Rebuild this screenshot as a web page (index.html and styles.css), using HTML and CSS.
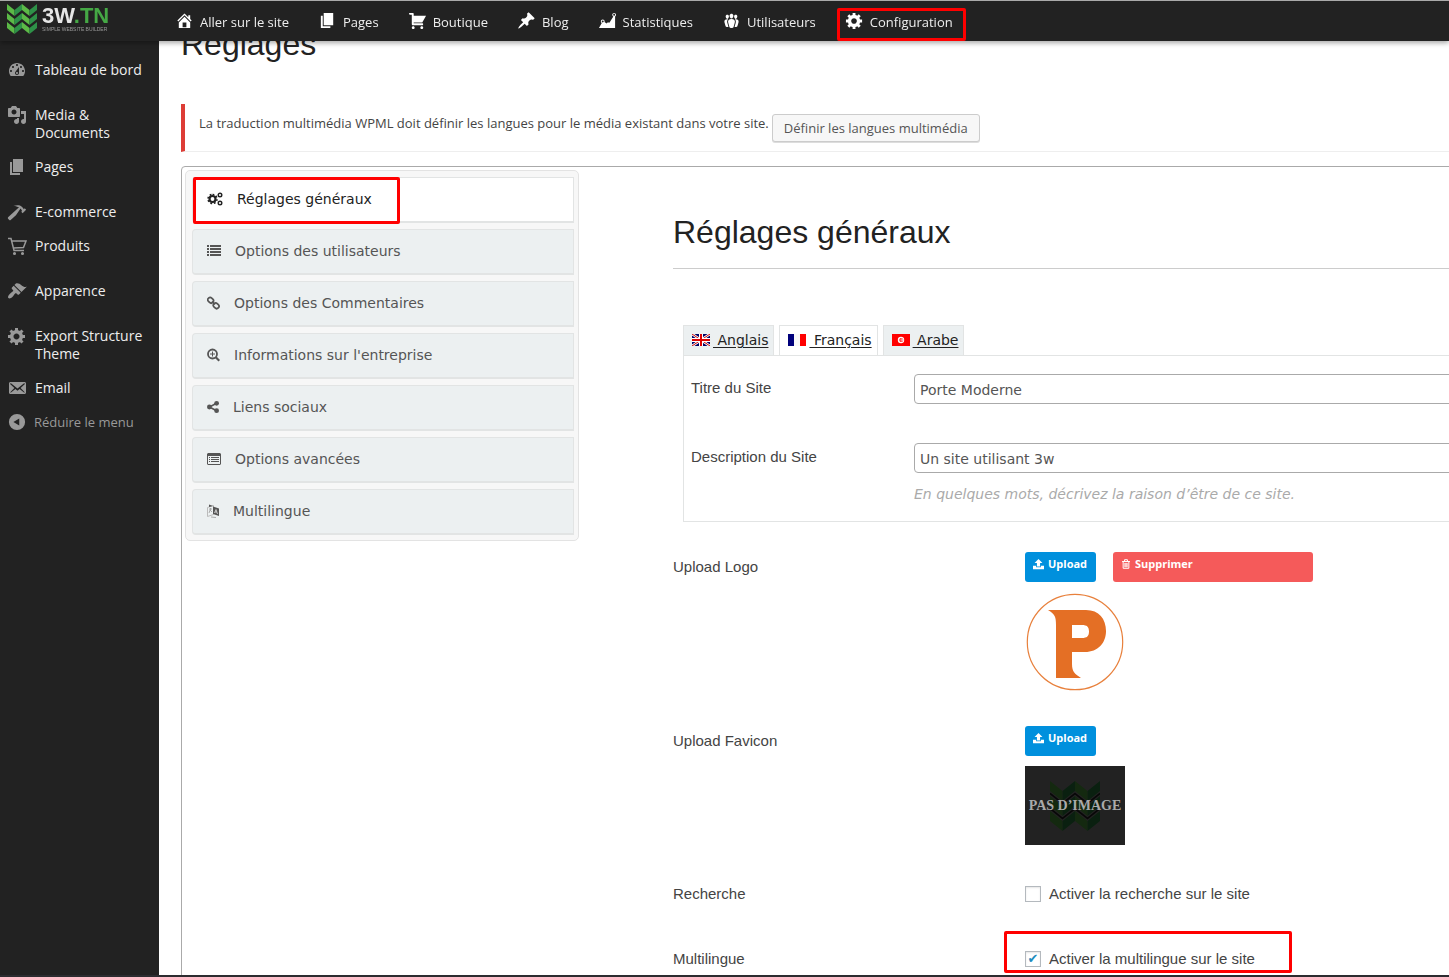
FILE: index.html
```html
<!DOCTYPE html>
<html lang="fr">
<head>
<meta charset="utf-8">
<title>Réglages</title>
<link rel="stylesheet" href="styles.css">
</head>
<body>
<svg class="sprite" aria-hidden="true">
  <symbol id="page" viewBox="0 0 20 20"><path d="M6 15V2h10v13H6zm-1 1h8v2H3V5h2v11z"/></symbol>
  <symbol id="gear" viewBox="0 0 20 20"><path d="M18 12h-2.180c-.17.7-.44 1.350-.81 1.930l1.540 1.540-2.100 2.100-1.540-1.540c-.58.36-1.230.63-1.910.79V19H8v-2.180c-.68-.16-1.330-.43-1.910-.79l-1.540 1.540-2.120-2.120 1.540-1.540c-.36-.58-.63-1.230-.79-1.910H1V9.030h2.170c.16-.7.44-1.350.8-1.940L2.430 5.550l2.100-2.100 1.540 1.540c.58-.37 1.240-.64 1.930-.81V2h3v2.180c.68.16 1.330.43 1.910.79l1.540-1.540 2.120 2.120-1.540 1.540c.36.59.64 1.240.8 1.940H18V12zm-8.500 1.500c1.660 0 3-1.340 3-3s-1.340-3-3-3-3 1.340-3 3 1.340 3 3 3z"/></symbol>
  <symbol id="upload" viewBox="0 0 14 14"><path d="M7 0L2 5.200h3v4.300h4V5.200h3zM0 8.500h4v2h6v-2h4V13H0z"/></symbol>
  <symbol id="chevrons" viewBox="0 0 30 30">
    <g class="leaf-a"><path d="M0 0l7.500 6v6L0 6zM15 0l7.500 6v6L15 6zM0 9l7.500 6v6L0 15zM15 9l7.500 6v6L15 15zM0 18l7.500 6v6L0 24zM15 18l7.500 6v6L15 24z"/></g>
    <g class="leaf-b"><path d="M15 0L7.500 6v6L15 6zM30 0l-7.500 6v6L30 6zM15 9l-7.500 6v6l7.500-6zM30 9l-7.500 6v6l7.500-6zM15 18l-7.500 6v6l7.500-6zM30 18l-7.500 6v6l7.500-6z"/></g>
    <path class="leaf-gap" d="M0 7.500l7.500 6L15 7.500l7.500 6 7.500-6M0 16.500l7.500 6 7.500-6 7.500 6 7.500-6"/>
  </symbol>
</svg>

<header class="topbar">
  <a class="brand" href="#" aria-label="3W.TN">
    <svg class="brand-mark"><use href="#chevrons"/></svg>
    <span class="brand-words">
      <span class="brand-name">3W<span class="brand-tn">.TN</span></span>
      <span class="brand-tag">SIMPLE WEBSITE BUILDER</span>
    </span>
  </a>
  <nav class="topnav">
    <a href="#"><svg viewBox="0 0 20 20"><path d="M16 8.500l1.530 1.530-1.060 1.060L10 4.600l-6.470 6.490-1.060-1.060L10 2.500l4 4v-2h2v4zm-6-2.460l6 5.990V18H4v-5.970zM12 17v-5H8v5h4z"/></svg>Aller sur le site</a>
    <a href="#"><svg><use href="#page"/></svg>Pages</a>
    <a href="#"><svg viewBox="0 0 20 20"><path d="M6 13h9c.55 0 1 .45 1 1s-.45 1-1 1H5c-.55 0-1-.45-1-1V4H2c-.55 0-1-.45-1-1s.45-1 1-1h3c.55 0 1 .45 1 1v2h13l-4 7H6v1zm-.5 3c.83 0 1.500.67 1.500 1.500S6.330 19 5.500 19 4 18.330 4 17.500 4.670 16 5.500 16zm9 0c.83 0 1.500.67 1.500 1.500s-.67 1.500-1.500 1.500-1.500-.67-1.500-1.500.67-1.500 1.500-1.500z"/></svg>Boutique</a>
    <a href="#"><svg viewBox="0 0 20 20"><path d="M10.440 3.020l1.820-1.820 6.360 6.350-1.830 1.820c-1.050-.68-2.480-.57-3.410.36l-.75.75c-.92.93-1.040 2.350-.35 3.410l-1.830 1.820-2.410-2.410-2.800 2.790c-.42.42-3.380 2.710-3.800 2.290s1.860-3.390 2.280-3.810l2.790-2.790L4.100 9.360l1.830-1.820c1.050.69 2.480.57 3.400-.36l.75-.75c.93-.92 1.050-2.350.36-3.410z"/></svg>Blog</a>
    <a href="#"><svg viewBox="0 0 20 20"><path d="M18 18l.01-12.280c.59-.35.99-.99.99-1.720 0-1.100-.9-2-2-2s-2 .9-2 2c0 .8.47 1.480 1.140 1.800l-4.130 6.580c-.33-.24-.73-.38-1.160-.38-.84 0-1.550.51-1.850 1.240l-2.140-1.530c.09-.22.14-.46.14-.71 0-1.110-.89-2-2-2-1.100 0-2 .89-2 2 0 .73.4 1.360.98 1.710L1 18h17zM17 3c.55 0 1 .45 1 1s-.45 1-1 1-1-.45-1-1 .45-1 1-1zM5 10c.55 0 1 .45 1 1s-.45 1-1 1-1-.45-1-1 .45-1 1-1z"/></svg>Statistiques</a>
    <a href="#"><svg viewBox="0 0 20 20"><path d="M8.030 4.460c-.29 1.280.55 3.460 1.970 3.460 1.410 0 2.250-2.180 1.960-3.460-.22-.98-1.080-1.630-1.960-1.630-.89 0-1.740.65-1.970 1.630zm-4.130.9c-.25 1.080.47 2.930 1.670 2.930s1.920-1.850 1.670-2.930c-.19-.83-.92-1.390-1.670-1.390s-1.480.56-1.670 1.390zm8.860 0c-.25 1.080.47 2.930 1.660 2.930 1.200 0 1.920-1.850 1.670-2.930-.19-.83-.92-1.390-1.670-1.390-.74 0-1.470.56-1.660 1.390zm-.59 11.430l1.250-4.300C14.200 10 12.710 8.470 10 8.470c-2.720 0-4.210 1.530-3.440 4.020l1.260 4.300C8.050 17.510 9 18 10 18c.98 0 1.940-.49 2.170-1.210zm-6.100-7.630c-.49.67-.96 1.830-.42 3.590l1.120 3.790c-.34.2-.77.31-1.200.31-.85 0-1.650-.41-1.850-1.030l-1.070-3.650c-.65-2.110.61-3.400 2.920-3.400.27 0 .54.02.79.06-.1.1-.2.22-.29.33zm8.350-.39c2.310 0 3.580 1.290 2.920 3.400l-1.070 3.650c-.2.62-1 1.030-1.850 1.030-.43 0-.86-.11-1.200-.31l1.110-3.770c.55-1.780.08-2.940-.42-3.610-.08-.11-.18-.23-.28-.33.25-.04.51-.06.79-.06z"/></svg>Utilisateurs</a>
    <a class="marked marked-top" href="#"><svg><use href="#gear"/></svg>Configuration</a>
  </nav>
</header>

<div class="layout">
  <nav class="sidebar">
    <a href="#"><svg viewBox="0 0 20 20"><path d="M3.760 16h12.480c1.100-1.370 1.760-3.110 1.760-5 0-4.420-3.580-8-8-8s-8 3.580-8 8c0 1.890.66 3.630 1.760 5zM10 4c.55 0 1 .45 1 1s-.45 1-1 1-1-.45-1-1 .45-1 1-1zM6 6c.55 0 1 .45 1 1s-.45 1-1 1-1-.45-1-1 .45-1 1-1zm8 0c.55 0 1 .45 1 1s-.45 1-1 1-1-.45-1-1 .45-1 1-1zm-5.370 5.550L12 7v6c0 1.100-.9 2-2 2s-2-.9-2-2c0-.57.24-1.080.63-1.450zM4 10c.55 0 1 .45 1 1s-.45 1-1 1-1-.45-1-1 .45-1 1-1zm12 0c.55 0 1 .45 1 1s-.45 1-1 1-1-.45-1-1 .45-1 1-1zm-5 3c0-.55-.45-1-1-1s-1 .45-1 1 .45 1 1 1 1-.45 1-1z"/></svg>Tableau de bord</a>
    <a class="group" href="#"><svg viewBox="0 0 20 20"><path d="M13 11V4c0-.55-.45-1-1-1h-1.670L9 1H5L3.670 3H2c-.55 0-1 .45-1 1v7c0 .55.45 1 1 1h10c.55 0 1-.45 1-1zM7 4.500c1.380 0 2.500 1.120 2.500 2.500S8.380 9.500 7 9.500 4.500 8.380 4.500 7 5.620 4.500 7 4.500zM14 6h5v10.500c0 1.380-1.120 2.500-2.500 2.500S14 17.880 14 16.500s1.120-2.500 2.500-2.500c.17 0 .34.02.5.05V9h-3V6zm-4 8.050V13h2v3.500c0 1.380-1.120 2.500-2.500 2.500S7 17.880 7 16.500 8.120 14 9.500 14c.17 0 .34.02.5.05z"/></svg>Media &amp; Documents</a>
    <a href="#"><svg><use href="#page"/></svg>Pages</a>
    <a class="group" href="#"><svg viewBox="0 0 20 20"><path d="M17.700 6.320l1.410 1.420-3.470 3.410-1.420-1.420.84-.82c-.32-.76-.81-1.570-1.510-2.310l-4.610 6.590-5.260 4.700c-.39.39-1.020.39-1.420 0l-1.200-1.200c-.39-.39-.39-1.020 0-1.410l10.970-9.920c-1.370-.86-3.210-1.460-5.670-1.480 2.700-.82 4.950-.93 6.580-.3 1.700.66 2.820 2.200 3.910 3.580z"/></svg>E-commerce</a>
    <a href="#"><svg class="line" viewBox="0 0 20 20"><path d="M1 2.500h3l3 12h10M4.600 5H19l-2.500 6.500L6.500 12"/><circle cx="7.500" cy="17.500" r=".8"/><circle cx="15.500" cy="17.500" r=".8"/></svg>Produits</a>
    <a class="group" href="#"><svg viewBox="0 0 20 20"><path d="M14.480 11.060L7.410 3.990l1.500-1.500c.5-.56 2.300-.47 3.510.32 1.210.8 1.430 1.280 2.910 2.100 1.180.64 2.450 1.260 4.450.85zm-.71.71L6.700 4.700 4.930 6.470c-.39.39-.39 1.020 0 1.410l1.060 1.060c.39.39.39 1.030 0 1.420-.6.6-1.430 1.110-2.210 1.690-.35.26-.7.53-1.010.84C1.430 14.230.4 16.080 1.400 17.070c.99 1 2.840-.03 4.180-1.360.31-.31.58-.66.85-1.020.57-.78 1.080-1.610 1.690-2.210.39-.39 1.020-.39 1.410 0l1.060 1.060c.39.39 1.020.39 1.410 0z"/></svg>Apparence</a>
    <a class="group" href="#"><svg><use href="#gear"/></svg>Export Structure Theme</a>
    <a href="#"><svg viewBox="0 0 20 20"><path d="M19 14.500v-9c0-.83-.67-1.500-1.500-1.500H3.490c-.83 0-1.500.67-1.500 1.500v9c0 .83.67 1.500 1.500 1.500H17.500c.83 0 1.500-.67 1.500-1.500zm-1.310-9.110c.33.33.15.67-.03.84L13.600 10l3.900 4.060c.12.14.2.36.06.51-.13.16-.43.15-.56.05l-4.370-3.730-2.140 1.950-2.130-1.950-4.370 3.730c-.13.1-.43.11-.56-.05-.14-.15-.06-.37.06-.51l3.900-4.060-4.060-3.770c-.18-.17-.36-.51-.03-.84s.67-.17.95.07l6.240 5.040 6.250-5.040c.28-.24.62-.4.95-.07z"/></svg>Email</a>
    <button class="collapse" type="button"><svg viewBox="0 0 20 20"><path fill-rule="evenodd" d="M10 1a9 9 0 100 18 9 9 0 000-18zm2.500 5v8L6 10z"/></svg>Réduire le menu</button>
  </nav>

  <main class="content">
    <h1>Réglages</h1>
    <div class="notice">
      <span>La traduction multimédia WPML doit définir les langues pour le média existant dans votre site.</span>
      <button type="button">Définir les langues multimédia</button>
    </div>

    <div class="panel">
      <nav class="tabs">
        <a class="current marked marked-tab" href="#"><svg class="w16" viewBox="0 0 16 14"><g fill="none" stroke="currentColor"><circle cx="5.500" cy="7" r="3" stroke-width="2.200"/><path stroke-width="1.600" stroke-dasharray="1.800 1.730" d="M5.500 2.500a4.500 4.500 0 110 9 4.500 4.500 0 110-9"/><circle cx="13" cy="3" r="1.800" stroke-width="1.400"/><circle cx="13" cy="11" r="1.800" stroke-width="1.400"/></g></svg>Réglages généraux</a>
        <a href="#"><svg class="w14" viewBox="0 0 14 14"><path d="M0 1h2v2H0zm3 0h11v2H3zM0 4h2v2H0zm3 0h11v2H3zM0 7h2v2H0zm3 0h11v2H3zm-3 3h2v2H0zm3 0h11v2H3z"/></svg>Options des utilisateurs</a>
        <a href="#"><svg class="w13" viewBox="0 0 13 14"><g fill="none" stroke="currentColor" stroke-width="1.700"><rect x="-2.700" y="-2.200" width="6" height="4.600" rx="2.200" transform="translate(3.500 4) rotate(45)"/><rect x="-2.700" y="-2.200" width="6" height="4.600" rx="2.200" transform="translate(9 9.500) rotate(45)"/><path d="M5 5.500l3 3"/></g></svg>Options des Commentaires</a>
        <a href="#"><svg class="w13" viewBox="0 0 13 14"><g fill="none" stroke="currentColor"><circle cx="5.500" cy="6" r="4.500" stroke-width="1.800"/><path stroke-width="2.200" d="M8.700 9.200l3.600 3.600"/><path d="M3 6h5M5.500 3.500v5"/></g></svg>Informations sur l'entreprise</a>
        <a href="#"><svg class="w12" viewBox="0 0 12 14"><path d="M10 3L2.500 7l7.500 4" fill="none" stroke="currentColor" stroke-width="1.600"/><circle cx="9.600" cy="3.300" r="2.400"/><circle cx="2.400" cy="7" r="2.400"/><circle cx="9.600" cy="10.700" r="2.400"/></svg>Liens sociaux</a>
        <a href="#"><svg class="w14" viewBox="0 0 14 14"><path fill-rule="evenodd" d="M1 1h12l1 1v10l-1 1H1l-1-1V2zm0 3v8h12V4zm1 1h1v1H2zm2 0h8v1H4zM2 7h1v1H2zm2 0h8v1H4zM2 9h1v1H2zm2 0h8v1H4z"/></svg>Options avancées</a>
        <a href="#"><svg class="w12" viewBox="0 0 12 14"><path d="M.5 3.500l6-2v9l-6 2z" fill="none" stroke="#bbb"/><path d="M2 5h3M3.500 4v1L2 9m1-3l2 2" fill="none" stroke="#999" stroke-width=".8"/><path d="M2 .5l4 1.500L2 3zM6 2.500l6 2V12l-6-2z"/><path d="M7.500 9L9 5.500 10.500 10M8 8h2" fill="none" stroke="#ddd" stroke-width=".8"/><path d="M4 13l5 .5" stroke="#aaa"/></svg>Multilingue</a>
      </nav>

      <form class="settings">
        <h2>Réglages généraux</h2>
        <div class="lang">
          <nav class="lang-tabs">
            <a href="#"><svg viewBox="0 0 18 12"><path fill="#006" d="M0 0h18v12H0z"/><path stroke="#fff" stroke-width="2.600" d="M0 0l18 12M18 0L0 12"/><path stroke="#c00" d="M0 0l18 12M18 0L0 12"/><path stroke="#fff" stroke-width="4" d="M9 0v12M0 6h18"/><path stroke="#d00" stroke-width="2" d="M9 0v12M0 6h18"/></svg><span>&nbsp;Anglais</span></a>
            <a class="current" href="#"><svg viewBox="0 0 18 12"><path fill="#00007b" d="M0 0h6v12H0z"/><path fill="#f8f8f8" d="M6 0h6v12H6z"/><path fill="#f00" d="M12 0h6v12h-6z"/></svg><span>&nbsp;Français</span></a>
            <a href="#"><svg viewBox="0 0 18 12"><path fill="#f00" d="M0 0h18v12H0z"/><circle cx="9" cy="6" r="3.200" fill="#fff"/><circle cx="9.300" cy="6" r="2" fill="#f00"/><circle cx="9.900" cy="6" r="1.400" fill="#fff"/><circle cx="9.900" cy="6" r=".7" fill="#f00"/></svg><span>&nbsp;Arabe</span></a>
          </nav>
          <div class="lang-box">
            <div class="field">
              <label for="title">Titre du Site</label>
              <input id="title" type="text" value="Porte Moderne">
            </div>
            <div class="field">
              <label for="desc">Description du Site</label>
              <div>
                <input id="desc" type="text" value="Un site utilisant 3w">
                <p class="hint">En quelques mots, décrivez la raison d’être de ce site.</p>
              </div>
            </div>
          </div>
        </div>

        <div class="row row-logo">
          <span class="row-label">Upload Logo</span>
          <div>
            <div class="buttons">
              <button class="upload" type="button"><svg><use href="#upload"/></svg>Upload</button>
              <button class="remove" type="button"><svg viewBox="0 0 12 14"><path fill="none" stroke="currentColor" stroke-width="1.400" d="M.5 3.500h11M4 3V1h4v2M2 4v9h8V4M4.500 5.500v6M6 5.500v6M7.500 5.500v6"/></svg>Supprimer</button>
            </div>
            <svg class="logo" viewBox="0 0 100 100"><circle cx="50" cy="50" r="47.700" fill="none" stroke="#e8803c" stroke-width="1.200"/><path fill="#e46f25" fill-rule="evenodd" d="M23 18h38c13 0 20 9 20 21s-8 21-21 21H47v12c0 8 3 10 9 14H31V33c0-8-1-11-8-15zm24 15v13h10c5 0 7-2 7-6.500S62 33 57 33z"/></svg>
          </div>
        </div>

        <div class="row row-icon">
          <span class="row-label">Upload Favicon</span>
          <div>
            <div class="buttons">
              <button class="upload" type="button"><svg><use href="#upload"/></svg>Upload</button>
            </div>
            <div class="no-image">
              <svg><use href="#chevrons"/></svg>
              <span>PAS D’IMAGE</span>
            </div>
          </div>
        </div>

        <div class="row row-check">
          <span class="row-label">Recherche</span>
          <label class="check"><input type="checkbox">Activer la recherche sur le site</label>
        </div>
        <div class="row row-check">
          <span class="row-label">Multilingue</span>
          <label class="check marked marked-check"><input type="checkbox" checked>Activer la multilingue sur le site</label>
        </div>
      </form>
    </div>
  </main>
</div>
<div class="taskbar"></div>
</body>
</html>
```
FILE: styles.css
```css
*, ::before, ::after { box-sizing: border-box; }

html { height: 100%; }

body {
  margin: 0;
  height: 100%;
  overflow: hidden;
  background: #fff;
  color: #444;
  font: 13px/18px "Open Sans", sans-serif;
}

a { color: inherit; text-decoration: none; }
button { font: inherit; color: inherit; cursor: pointer; }
svg { display: block; flex: none; fill: currentColor; }
.sprite { position: absolute; width: 0; height: 0; }

.leaf-a { fill: #5cb947; }
.leaf-b { fill: #2e9148; }
.leaf-gap { fill: none; stroke: #222; stroke-width: 1; }

/* red frames around the highlighted controls */
.marked { position: relative; }
.marked::after {
  content: "";
  position: absolute;
  border: 3px solid #f00;
  border-radius: 2px;
}
.marked-top::after { inset: 7px -13px 0 -8px; }
.marked-tab::after { top: -1px; left: 0; width: 207px; height: 47px; }
.marked-check::after { inset: -18px -37px -4px -21px; }

/* top bar */
.topbar {
  position: fixed;
  z-index: 2;
  inset: 0 0 auto;
  height: 41px;
  display: flex;
  background: #222;
  border-top: 1px solid #aaa;
  box-shadow: 0 2px 5px rgba(0, 0, 0, .35);
  color: #eee;
}
.brand { display: flex; width: 175px; padding: 3px 0 0 7px; gap: 5px; }
.brand-mark { width: 30px; height: 30px; }
.brand-words { display: flex; flex-direction: column; padding-top: 2px; }
.brand-name { font: bold 22px/20px "Liberation Sans", sans-serif; color: #e6e6e6; }
.brand-tn { color: #45a845; }
.brand-tag { font: 5px/6px "Liberation Sans", sans-serif; color: #999; }
.topnav { display: flex; gap: 29px; }
.topnav a { display: flex; align-items: center; gap: 6px; height: 40px; padding-top: 2px; }
.topnav svg { width: 19px; height: 19px; margin-bottom: 4px; color: #fff; }

.layout { display: flex; min-height: 100%; }

/* left menu */
.sidebar {
  flex: none;
  width: 159px;
  padding-top: 53px;
  background: #222;
  color: #eee;
  font-size: 14px;
}
.sidebar a, .collapse { display: flex; gap: 8px; padding: 8px 12px 8px 7px; }
.sidebar svg { width: 20px; height: 20px; margin: -1px 0; color: #999; }
.sidebar .group { margin-top: 11px; }
.sidebar .line { fill: none; stroke: currentColor; stroke-width: 1.5; }
.sidebar .collapse { padding-left: 8px; border: 0; background: none; color: #999; font-size: 13px; }
.sidebar .collapse svg { height: 18px; width: 18px; margin: 0; }

/* main column */
.content { flex: 1; min-width: 0; padding: 25px 0 0 22px; overflow: hidden; }
h1, h2 { margin: 0; font: 32px/38px "Liberation Sans", sans-serif; color: #222; }

.notice {
  display: flex;
  gap: 3px;
  height: 48px;
  margin-top: 41px;
  padding: 10px 14px;
  border-left: 4px solid #dd3d36;
  border-bottom: 1px solid #eee;
}
.notice button {
  height: 28px;
  padding: 0 11px;
  background: #f7f7f7;
  border: 1px solid #ccc;
  border-radius: 3px;
  box-shadow: 0 1px 0 #ddd;
  color: #555;
}

.panel {
  display: flex;
  align-items: flex-start;
  margin: 14px -20px 0 0;
  border: 1px solid #aaa;
  border-radius: 4px;
}

.tabs {
  display: flex;
  flex-direction: column;
  gap: 6px;
  flex: none;
  width: 394px;
  margin: 3px;
  padding: 6px 4px 5px 6px;
  background: #f7f7f7;
  border: 1px solid #e3e3e3;
  border-radius: 5px;
  color: #555;
  font: 14px/20px "DejaVu Sans", sans-serif;
}
.tabs a {
  display: flex;
  align-items: center;
  gap: 14px;
  height: 46px;
  padding: 0 14px 2px;
  background: #ecf0f1;
  border: 1px solid #e2e4e4;
  border-bottom-width: 2px;
  border-radius: 4px 0 0 4px;
}
.tabs .current { background: #fff; color: #222; }
.tabs svg { height: 14px; }
.w16 { width: 16px; }
.w14 { width: 14px; }
.w13 { width: 13px; }
.w12 { width: 12px; }

/* settings form */
.settings {
  flex: 1;
  min-width: 0;
  padding: 46px 0 20px 91px;
  color: #444;
  font: 15px/20px "Liberation Sans", sans-serif;
}
.settings h2 { padding-bottom: 17px; border-bottom: 1px solid #ccc; }

.lang { margin: 56px 0 0 10px; }
.lang-tabs { display: flex; gap: 5px; }
.lang-tabs a {
  display: flex;
  align-items: center;
  gap: 3px;
  height: 30px;
  padding: 0 5px 1px 8px;
  background: #ecf0f1;
  border: 1px solid #e2e4e4;
  border-bottom: 0;
  color: #222;
  font: 14px/20px "DejaVu Sans", sans-serif;
}
.lang-tabs .current { background: #fff; }
.lang-tabs span { text-decoration: underline; text-underline-offset: 2px; }
.lang-tabs svg { width: 18px; height: 12px; }
.lang-box { padding: 18px 0 17px 7px; border: 1px solid #e2e4e4; }

.field { display: grid; grid-template-columns: 223px 1fr; align-items: start; }
.field + .field { margin-top: 39px; }
.field label { padding-top: 4px; }
.field input {
  display: block;
  width: 100%;
  height: 30px;
  padding: 2px 5px 0;
  border: 1px solid #aaa;
  border-radius: 4px;
  color: #555;
  background: #fff;
  font: 14px/20px "DejaVu Sans", sans-serif;
}
.hint { margin: 11px 0 0; color: #aaa; font: italic 14px/20px "DejaVu Sans", sans-serif; }

.row { display: grid; grid-template-columns: 352px 1fr; align-items: start; }
.row-logo { margin-top: 30px; }
.row-icon { margin-top: 34px; }
.row-check { margin-top: 39px; }
.row-check + .row-check { margin-top: 45px; }
.row-label { padding-top: 5px; }
.row-check .row-label { padding: 0; }

.buttons { display: flex; gap: 17px; }
.buttons button {
  display: flex;
  align-items: flex-start;
  gap: 4px;
  height: 30px;
  padding: 4px 8px;
  border: 0;
  border-radius: 3px;
  color: #fff;
  font: bold 11px/16px "Open Sans", sans-serif;
}
.buttons svg { width: 10px; height: 10px; margin-top: 3px; }
.buttons .upload { width: 71px; background: #0090dd; }
.buttons .upload svg { width: 11px; height: 11px; }
.buttons .remove { width: 200px; background: #f55a5a; }

.logo { width: 100px; height: 100px; margin-top: 10px; }

.no-image {
  display: grid;
  place-items: center;
  width: 100px;
  height: 79px;
  margin-top: 10px;
  background: #222;
}
.no-image svg, .no-image span { grid-area: 1 / 1; }
.no-image svg { width: 50px; height: 52px; filter: brightness(.22); }
.no-image span {
  z-index: 1;
  color: #aaa;
  font: bold 14px/16px "Liberation Serif", serif;
  white-space: nowrap;
}

.check { display: flex; align-items: center; gap: 8px; justify-self: start; }
.check input {
  appearance: none;
  width: 16px;
  height: 16px;
  margin: 0;
  border: 1px solid #b4b9be;
  background: #fff;
  box-shadow: inset 0 1px 2px rgba(0, 0, 0, .1);
}
.check input:checked::before {
  content: "✔";
  display: block;
  color: #1e8cbe;
  font: 13px/14px "DejaVu Sans", sans-serif;
  text-align: center;
}

.taskbar { position: fixed; z-index: 3; inset: auto 0 0; height: 2px; background: #2c2c30; }
```
